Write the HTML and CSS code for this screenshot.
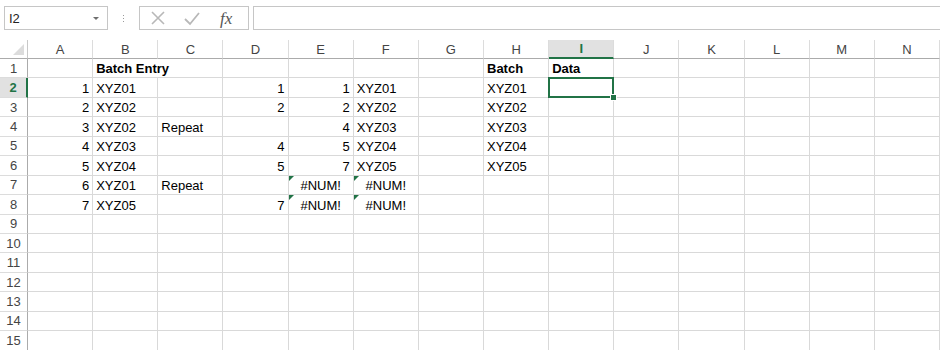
FILE: index.html
```html
<!DOCTYPE html>
<html>
<head>
<meta charset="utf-8">
<link rel="stylesheet" href="styles.css">
</head>
<body>
<div class="app">
  <div class="toolbar">
    <div class="namebox"><span class="nb-text">I2</span><span class="nb-arrow"></span></div>
    <div class="grip"><span></span><span></span><span></span></div>
    <div class="fxbox">
      <svg class="ic" width="16" height="16" viewBox="0 0 16 16"><path d="M2 2 L14 14 M14 2 L2 14" stroke="#b8b8b8" stroke-width="1.6" fill="none"/></svg>
      <svg class="ic" width="18" height="16" viewBox="0 0 18 16"><path d="M2 9 L7 14 L16 3" stroke="#b8b8b8" stroke-width="1.8" fill="none"/></svg>
      <span class="fx">fx</span>
    </div>
    <div class="formula"></div>
  </div>
  <div class="sheet">
    <div class="corner"></div>
    <div class="ch">A</div><div class="ch">B</div><div class="ch">C</div><div class="ch">D</div><div class="ch">E</div><div class="ch">F</div><div class="ch">G</div><div class="ch">H</div><div class="ch sel">I</div><div class="ch">J</div><div class="ch">K</div><div class="ch">L</div><div class="ch">M</div><div class="ch">N</div>

    <div class="rh">1</div>
    <div></div><div class="b span2">Batch Entry</div><div></div><div></div><div></div><div></div><div class="b">Batch</div><div class="b">Data</div><div></div><div></div><div></div><div></div><div></div>

    <div class="rh sel">2</div>
    <div class="n">1</div><div>XYZ01</div><div></div><div class="n">1</div><div class="n">1</div><div>XYZ01</div><div></div><div>XYZ01</div><div class="active"></div><div></div><div></div><div></div><div></div><div></div>

    <div class="rh">3</div>
    <div class="n">2</div><div>XYZ02</div><div></div><div class="n">2</div><div class="n">2</div><div>XYZ02</div><div></div><div>XYZ02</div><div></div><div></div><div></div><div></div><div></div><div></div>

    <div class="rh">4</div>
    <div class="n">3</div><div>XYZ02</div><div>Repeat</div><div></div><div class="n">4</div><div>XYZ03</div><div></div><div>XYZ03</div><div></div><div></div><div></div><div></div><div></div><div></div>

    <div class="rh">5</div>
    <div class="n">4</div><div>XYZ03</div><div></div><div class="n">4</div><div class="n">5</div><div>XYZ04</div><div></div><div>XYZ04</div><div></div><div></div><div></div><div></div><div></div><div></div>

    <div class="rh">6</div>
    <div class="n">5</div><div>XYZ04</div><div></div><div class="n">5</div><div class="n">7</div><div>XYZ05</div><div></div><div>XYZ05</div><div></div><div></div><div></div><div></div><div></div><div></div>

    <div class="rh">7</div>
    <div class="n">6</div><div>XYZ01</div><div>Repeat</div><div></div><div class="err">#NUM!</div><div class="err">#NUM!</div><div></div><div></div><div></div><div></div><div></div><div></div><div></div><div></div>

    <div class="rh">8</div>
    <div class="n">7</div><div>XYZ05</div><div></div><div class="n">7</div><div class="err">#NUM!</div><div class="err">#NUM!</div><div></div><div></div><div></div><div></div><div></div><div></div><div></div><div></div>

    <div class="rh">9</div>
    <div></div><div></div><div></div><div></div><div></div><div></div><div></div><div></div><div></div><div></div><div></div><div></div><div></div><div></div>
    <div class="rh">10</div>
    <div></div><div></div><div></div><div></div><div></div><div></div><div></div><div></div><div></div><div></div><div></div><div></div><div></div><div></div>
    <div class="rh">11</div>
    <div></div><div></div><div></div><div></div><div></div><div></div><div></div><div></div><div></div><div></div><div></div><div></div><div></div><div></div>
    <div class="rh">12</div>
    <div></div><div></div><div></div><div></div><div></div><div></div><div></div><div></div><div></div><div></div><div></div><div></div><div></div><div></div>
    <div class="rh">13</div>
    <div></div><div></div><div></div><div></div><div></div><div></div><div></div><div></div><div></div><div></div><div></div><div></div><div></div><div></div>
    <div class="rh">14</div>
    <div></div><div></div><div></div><div></div><div></div><div></div><div></div><div></div><div></div><div></div><div></div><div></div><div></div><div></div>
    <div class="rh">15</div>
    <div></div><div></div><div></div><div></div><div></div><div></div><div></div><div></div><div></div><div></div><div></div><div></div><div></div><div></div>
  </div>
</div>
</body>
</html>
```
FILE: styles.css
```css
html, body {
  margin: 0;
  padding: 0;
  background: #ffffff;
}
.app {
  width: 940px;
  height: 350px;
  overflow: hidden;
  font-family: "Liberation Sans", Arial, sans-serif;
  color: #000;
}
.toolbar {
  display: flex;
  align-items: stretch;
  height: 24px;
  margin-top: 6px;
  padding-left: 4px;
}
.namebox {
  box-sizing: border-box;
  width: 104px;
  border: 1px solid #c6c6c6;
  display: flex;
  align-items: center;
  justify-content: space-between;
  padding: 0 8px 0 4px;
  font-size: 13px;
  color: #222;
}
.nb-arrow {
  width: 0;
  height: 0;
  border-left: 3px solid transparent;
  border-right: 3px solid transparent;
  border-top: 3px solid #6e6e6e;
}
.grip {
  width: 31px;
  display: flex;
  flex-direction: column;
  align-items: center;
  justify-content: center;
  gap: 2px;
}
.grip span {
  width: 1px;
  height: 1px;
  background: #9a9a9a;
}
.fxbox {
  box-sizing: border-box;
  width: 110px;
  border: 1px solid #c6c6c6;
  display: flex;
  align-items: center;
  padding-left: 10px;
  gap: 17px;
}
.fx {
  font-family: "Liberation Serif", "Times New Roman", serif;
  font-style: italic;
  font-size: 17px;
  color: #555;
  margin-left: 2px;
  line-height: 1;
}
.formula {
  flex: 1;
  margin-left: 4px;
  border: 1px solid #c6c6c6;
  border-right: none;
}
.sheet {
  margin-top: 10px;
  display: grid;
  grid-template-columns: 28px repeat(14, 1fr);
  grid-template-rows: 19px repeat(15, 19.45px);
  font-size: 13px;
}
.sheet > div {
  box-sizing: border-box;
  border-right: 1px solid #d9d9d9;
  border-bottom: 1px solid #d9d9d9;
  display: flex;
  align-items: flex-end;
  padding: 0 3px 1px 3px;
  line-height: 15px;
  white-space: nowrap;
  min-width: 0;
  position: relative;
}
.sheet > .corner {
  border-right: 1px solid #c8c8c8;
  border-bottom: 1px solid #ababab;
}
.corner::after {
  content: "";
  position: absolute;
  right: 3px;
  bottom: 3px;
  width: 0;
  height: 0;
  border-left: 11px solid transparent;
  border-bottom: 11px solid #dcdcdc;
}
.sheet > .ch {
  justify-content: center;
  align-items: center;
  padding: 0;
  color: #444;
  font-size: 13px;
  border-right: 1px solid #dcdcdc;
  border-bottom: 1px solid #ababab;
}
.sheet > .ch.sel {
  background: #e1e1e1;
  color: #217346;
  font-weight: bold;
  border-bottom: 2px solid #217346;
}
.sheet > .rh {
  justify-content: center;
  align-items: center;
  padding: 0;
  color: #444;
  border-right: 1px solid #ababab;
  border-bottom: 1px solid #dcdcdc;
}
.sheet > .rh.sel {
  background: #e1e1e1;
  color: #217346;
  font-weight: bold;
  border-right: 2px solid #217346;
}
.sheet > .n {
  justify-content: flex-end;
}
.sheet > .b {
  font-weight: bold;
}
.sheet > .span2 {
  grid-column: span 2;
}
.sheet > .err {
  justify-content: center;
}
.err::before {
  content: "";
  position: absolute;
  top: 0;
  left: 0;
  width: 0;
  height: 0;
  border-top: 5px solid #217346;
  border-right: 5px solid transparent;
}
.active::after {
  content: "";
  position: absolute;
  z-index: 2;
  top: -1px;
  left: -1px;
  right: -1px;
  bottom: -1px;
  border: 2px solid #217346;
}
.active::before {
  content: "";
  position: absolute;
  z-index: 3;
  right: -4px;
  bottom: -4px;
  width: 5px;
  height: 5px;
  background: #217346;
  border: 1px solid #fff;
}
```
